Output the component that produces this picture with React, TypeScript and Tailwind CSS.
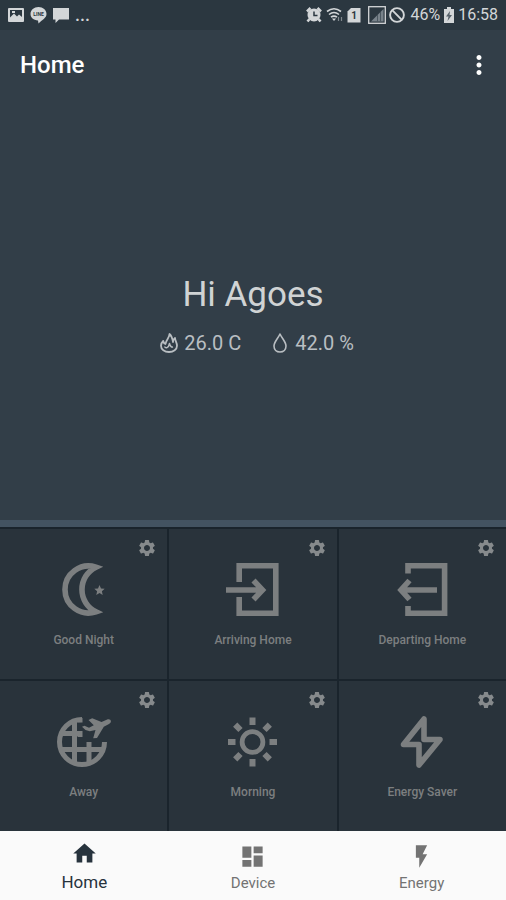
import { useState } from "react";
import type { ReactNode } from "react";
import { MdDashboard, MdFlashOn, MdHome, MdMoreVert, MdSettings } from "react-icons/md";

type Scene = {
        name: string;
        icon: ReactNode;
};

const scenes: Scene[] = [
        {
                name: "Good Night",
                icon: (
                        <>
                                <path d="M39.900 6.200A23.500 23.500 0 1 0 39.900 50.800A24.800 24.800 0 0 1 39.900 6.200Z" strokeLinejoin="miter" />
                                <path
                                        d="M43.500 24l1.500 3.400 3.700.400-2.800 2.500.800 3.700-3.200-1.900-3.200 1.900.800-3.700-2.800-2.500 3.700-.400z"
                                        fill="currentColor"
                                        stroke="none"
                                />
                        </>
                ),
        },
        {
                name: "Arriving Home",
                icon: (
                        <>
                                <path d="M14.200 21V4.700H50.800V52.300H14.200V36" />
                                <path d="M1 29H37M28.500 19.500L37.500 29L28.500 38.500" />
                        </>
                ),
        },
        {
                name: "Departing Home",
                icon: (
                        <>
                                <path d="M14 12.500V4.700H50.600V52.300H14V45" />
                                <path d="M43 29H8M15.500 19.500L7 29L15.500 38.500" />
                        </>
                ),
        },
        {
                name: "Away",
                icon: (
                        <>
                                <g strokeWidth="5">
                                        <path d="M26 6.500A22.500 22.500 0 1 0 48.500 29" />
                                        <path d="M18.500 8V50M5 20.500H26M5 36.500H47M33 29V50" />
                                        <path d="M24 5V9.500M24 18V24" />
                                </g>
                                <path
                                        d="M26 13.700L28.500 12.700L33 14.700L37.800 12.300L32.500 7L36.200 5.300L45.500 9L51.800 6.300Q54.500 5.800 55 8Q55 10 53 11L47.800 13.700L41 25L37.200 25.300L39.500 17L33.800 18.300L29.500 17Z"
                                        fill="currentColor"
                                        stroke="none"
                                />
                        </>
                ),
        },
        {
                name: "Morning",
                icon: (
                        <>
                                <circle cx="27.500" cy="29" r="10.400" strokeWidth="4.800" />
                                <path
                                        d="M27.500 4.500V12M27.500 46V53.500M3 29H10.500M44.500 29H52M10.200 11.700L15.500 17M39.500 41L44.800 46.300M10.200 46.300L15.500 41M39.500 17L44.800 11.700"
                                        strokeWidth="6"
                                />
                        </>
                ),
        },
        {
                name: "Energy Saver",
                icon: <path d="M30 6V26.500H46L25 52V31.500H9.500Z" strokeLinejoin="round" />,
        },
];

const tabs = [
        { name: "Home", Icon: MdHome },
        { name: "Device", Icon: MdDashboard },
        { name: "Energy", Icon: MdFlashOn },
];

function StatusBar() {
        return (
                <div className="flex h-[30px] items-center justify-between bg-[#2b3740] px-2 text-[#d3d6d8]">
                        <div className="flex items-center gap-[6px]">
                                <svg className="h-4 w-4" viewBox="0 0 16 16" aria-hidden="true">
                                        <rect x="0" y="1" width="16" height="14" rx="1" fill="currentColor" />
                                        <path d="M2 3H14V10L11 7.500L9 9.500L6 6.500L2 10.500Z" fill="#2b3740" />
                                        <path d="M4 4h3v2H4z" fill="currentColor" />
                                </svg>
                                <svg className="h-[18px] w-[17px]" viewBox="0 0 17 18" aria-hidden="true">
                                        <path d="M8.500 1C13 1 16.500 4 16.500 8C16.500 12 12 14 8.500 17.500L8 14.500C3.500 14 .500 11.500 .500 8C.500 4 4 1 8.500 1Z" fill="currentColor" />
                                        <text x="8.500" y="9.500" textAnchor="middle" fontSize="5" fontWeight="700" fontFamily="Roboto, sans-serif" fill="#2b3740">
                                                LINE
                                        </text>
                                </svg>
                                <svg className="h-4 w-4" viewBox="0 0 16 16" aria-hidden="true">
                                        <path d="M0 1H16V12.500H6L2.500 16V12.500H0Z" fill="currentColor" />
                                </svg>
                                <span className="text-lg font-medium leading-none">...</span>
                        </div>
                        <div className="flex items-center gap-[3px]">
                                <svg className="h-4 w-4" viewBox="0 0 16 16" fill="none" stroke="currentColor" aria-hidden="true">
                                        <circle cx="8" cy="8" r="6.500" fill="currentColor" stroke="none" />
                                        <path d="M1 4.500L4.500 1M11.500 1L15 4.500M3.500 12L1.500 14.500M12.500 12L14.500 14.500" strokeWidth="2.600" />
                                        <path d="M8 4.500V8.500H11.500" stroke="#2b3740" strokeWidth="1.500" />
                                </svg>
                                <svg className="ml-px h-4 w-[18px]" viewBox="0 0 18 16" fill="none" stroke="currentColor" aria-hidden="true">
                                        <path d="M1 4.500Q8 -1 15 4.500M3 7.500Q8 3.500 13 7.500M5 10.200Q8 8 11 10.200" strokeWidth="1.600" />
                                        <path d="M6 11.500H10L8 14Z" fill="currentColor" stroke="none" />
                                        <path d="M12.500 14V10M15.500 10V14" strokeWidth="1.200" opacity=".5" />
                                </svg>
                                <svg className="mr-1 h-4 w-[14px]" viewBox="0 0 14 16" aria-hidden="true">
                                        <path d="M4 1H13.500V15.500H.500V4.500Z" fill="currentColor" />
                                        <text x="7" y="12" textAnchor="middle" fontSize="10" fontWeight="700" fontFamily="Roboto, sans-serif" fill="#2b3740">
                                                1
                                        </text>
                                </svg>
                                <svg className="h-[18px] w-[18px]" viewBox="0 0 18 18" fill="none" stroke="currentColor" aria-hidden="true">
                                        <rect x=".700" y=".700" width="16.600" height="16.600" strokeWidth="1.300" />
                                        <path d="M3 15.500L15.500 3V15.500Z" fill="#78828a" stroke="none" />
                                        <path d="M9.500 15.500V9M12.500 15.500V6" stroke="#4b5760" strokeWidth="1" />
                                </svg>
                                <svg className="h-4 w-4" viewBox="0 0 16 16" fill="none" stroke="currentColor" strokeWidth="1.900" aria-hidden="true">
                                        <circle cx="8" cy="8" r="6.900" />
                                        <path d="M3.200 3.200L12.800 12.800" />
                                </svg>
                                <span className="ml-[2px] text-base leading-none">46%</span>
                                <svg className="h-4 w-3" viewBox="0 0 12 16" aria-hidden="true">
                                        <path d="M4 0H8V2H11V16H1V2H4Z" fill="currentColor" />
                                        <path d="M7 4L3 9.500H5.500L4.500 14L9 8H6.500Z" fill="#56616a" />
                                </svg>
                                <span className="text-base leading-none">16:58</span>
                        </div>
                </div>
        );
}

function SceneTile({ scene }: { scene: Scene }) {
        return (
                <div className="relative bg-[#29333b]">
                        <button type="button" className="flex h-[150px] w-full flex-col items-center pt-8 text-[#7c7f80]">
                                <svg className="h-14 w-14" viewBox="0 0 56 56" fill="none" stroke="currentColor" strokeWidth="5.600" aria-hidden="true">
                                        {scene.icon}
                                </svg>
                                <span className="mt-[15px] text-xs font-medium">{scene.name}</span>
                        </button>
                        <button type="button" aria-label={`${scene.name} settings`} className="absolute right-[10px] top-[9px] text-[#868a8c]">
                                <MdSettings className="h-5 w-5" />
                        </button>
                </div>
        );
}

export default function App() {
        const [active, setActive] = useState("Home");

        return (
                <div className="flex min-h-screen flex-col bg-[#323e48] font-['Roboto',sans-serif]">
                        <StatusBar />

                        <header className="flex h-[70px] items-center justify-between pl-5 pr-3">
                                <h1 className="text-2xl font-medium text-white">Home</h1>
                                <button type="button" aria-label="More options" className="text-white">
                                        <MdMoreVert className="h-[30px] w-[30px]" />
                                </button>
                        </header>

                        <main className="flex flex-1 flex-col">
                                <section className="flex flex-1 flex-col items-center justify-center gap-[14px] pt-3 text-[#d0d3d4]">
                                        <h2 className="text-[35px] leading-10">Hi Agoes</h2>
                                        <div className="flex items-center gap-8 pl-2 text-xl text-[#b9bec2]">
                                                <div className="flex items-center gap-[6px]">
                                                        <svg className="h-5 w-[18px]" viewBox="0 0 18 20" fill="none" stroke="currentColor" strokeWidth="1.800" strokeLinejoin="round" aria-hidden="true">
                                                                <path d="M9.500 1C9.500 5 6 6.500 5.500 11C4 10.500 3.500 9.500 3.200 8C1.800 9.300 1 11 1 12.800C1 16.500 4.500 19 9 19C13.500 19 17 16.500 17 12.800C17 9.500 15.200 8 15 5C13.500 6 13 7.500 13 9C12.500 6 12 3 9.500 1Z" />
                                                                <path d="M4.500 13.500C5.500 15.500 8.500 15.500 9.500 10.500C10 13 11.500 14.500 13 14" strokeWidth="1.500" />
                                                        </svg>
                                                        <span>26.0 C</span>
                                                </div>
                                                <div className="flex items-center gap-2">
                                                        <svg className="h-5 w-[14px]" viewBox="0 0 14 20" fill="none" stroke="currentColor" strokeWidth="1.600" strokeLinejoin="round" aria-hidden="true">
                                                                <path d="M7 1C5 5.500 1 9 1 13C1 16.500 3.500 19 7 19C10.500 19 13 16.500 13 13C13 9 9 5.500 7 1Z" />
                                                        </svg>
                                                        <span>42.0 %</span>
                                                </div>
                                        </div>
                                </section>

                                <section className="grid grid-cols-3 gap-[2px] border-t-[7px] border-[#435361] bg-[#1a242c] pt-[2px]">
                                        {scenes.map((scene) => (
                                                <SceneTile key={scene.name} scene={scene} />
                                        ))}
                                </section>
                        </main>

                        <nav className="grid h-[69px] grid-cols-3 bg-[#fafafa]">
                                {tabs.map(({ name, Icon }) => (
                                        <button
                                                key={name}
                                                type="button"
                                                onClick={() => setActive(name)}
                                                className={`flex flex-col items-center ${active === name ? "pt-[9px] text-[#27333d]" : "pt-3 text-[#737373]"}`}
                                        >
                                                <Icon className="h-[27px] w-[27px]" />
                                                <span className={active === name ? "mt-[3px] text-[17px] leading-6" : "mt-px text-[15px] leading-6"}>{name}</span>
                                        </button>
                                ))}
                        </nav>
                </div>
        );
}
